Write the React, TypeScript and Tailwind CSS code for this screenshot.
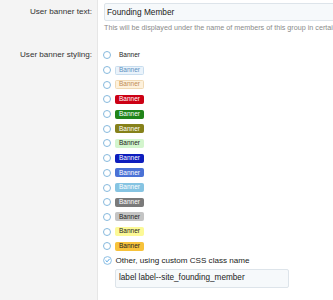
import React from "react";

type B = { bg: string; text: string; border: string };

const banners: { cls: string }[] = [
  { cls: "text-[#222] bg-transparent border-transparent" },
  { cls: "text-[#5b8fc0] bg-[#eaf3fb] border-[#c8ddee]" },
  { cls: "text-[#c08a54] bg-[#fdf1dc] border-[#f0d9b4]" },
  { cls: "text-white bg-[#cc0014] border-[#cc0014]" },
  { cls: "text-white bg-[#21851a] border-[#21851a]" },
  { cls: "text-white bg-[#86811a] border-[#86811a]" },
  { cls: "text-[#222] bg-[#d3f5cd] border-[#d3f5cd]" },
  { cls: "text-white bg-[#0d1dbd] border-[#0d1dbd]" },
  { cls: "text-white bg-[#4a72d6] border-[#4a72d6]" },
  { cls: "text-white bg-[#86c4e2] border-[#86c4e2]" },
  { cls: "text-white bg-[#7a7a7a] border-[#7a7a7a]" },
  { cls: "text-[#222] bg-[#c4c4c4] border-[#c4c4c4]" },
  { cls: "text-[#222] bg-[#fcf996] border-[#fcf996]" },
  { cls: "text-[#222] bg-[#f7c23b] border-[#f7c23b]" },
];

function Radio() {
  return (
    <span className="block w-[8px] h-[8px] rounded-full border border-[#86b9dd] bg-white shrink-0" />
  );
}

function CheckedRadio() {
  return (
    <svg width="9" height="9" viewBox="0 0 9 9" className="shrink-0 -ml-[0.5px]">
      <circle cx="4.5" cy="4.5" r="3.9" fill="white" stroke="#7fb7e0" strokeWidth="0.9" />
      <path d="M2.8 4.6 L4.1 5.8 L6.3 3.2" fill="none" stroke="#3f9be0" strokeWidth="0.9" strokeLinecap="round" strokeLinejoin="round" />
    </svg>
  );
}

export default function App() {
  return (
    <div className="w-[333px] h-[300px] overflow-hidden bg-white font-['Liberation_Sans',Arial,sans-serif] text-[#222]">
      {/* Row 1 */}
      <div className="flex h-[48px]">
        <div className="w-[98px] shrink-0 bg-[#f4f4f4] border-r border-[#e6e6e6] pr-[5px] pt-[7px] text-right text-[8.1px] leading-[10px] text-[#333]">
          User banner text:
        </div>
        <div className="flex-1 min-w-0 pl-[6px] pt-[3px]">
          <div className="w-[260px] h-[18px] border border-[#dde4ea] bg-[#f6f9fb] rounded-[2px] pl-[2px] flex items-center text-[8.3px] text-[#222] whitespace-nowrap">
            Founding Member
          </div>
          <div className="mt-[2px] text-[7.2px] leading-[10px] text-[#8a8a8a] whitespace-nowrap">
            This will be displayed under the name of members of this group in certain places.
          </div>
        </div>
      </div>
      {/* Row 2 */}
      <div className="flex h-[252px]">
        <div className="w-[98px] shrink-0 bg-[#f4f4f4] border-r border-[#e6e6e6] pr-[5px] text-right text-[8.1px] leading-[14.7px] text-[#333]">
          User banner styling:
        </div>
        <div className="flex-1 min-w-0 pl-[5px]">
          {banners.map((b, i) => (
            <div key={i} className="flex items-center h-[14.7px]">
              <Radio />
              <span
                className={`ml-[4px] h-[9px] px-[3px] border-[0.5px] rounded-[1.5px] flex items-center text-[6.5px] leading-none ${b.cls}`}
              >
                Banner
              </span>
            </div>
          ))}
          <div className="flex items-center h-[14.7px]">
            <CheckedRadio />
            <span className="ml-[4px] text-[8.1px] text-[#222] whitespace-nowrap">
              Other, using custom CSS class name
            </span>
          </div>
          <div className="ml-[12px] mt-[0.5px] w-[174px] h-[19px] border border-[#dde4ea] bg-[#f6f9fb] rounded-[2px] pl-[3px] flex items-center text-[8.2px] text-[#222] whitespace-nowrap">
            label label--site_founding_member
          </div>
        </div>
      </div>
    </div>
  );
}
